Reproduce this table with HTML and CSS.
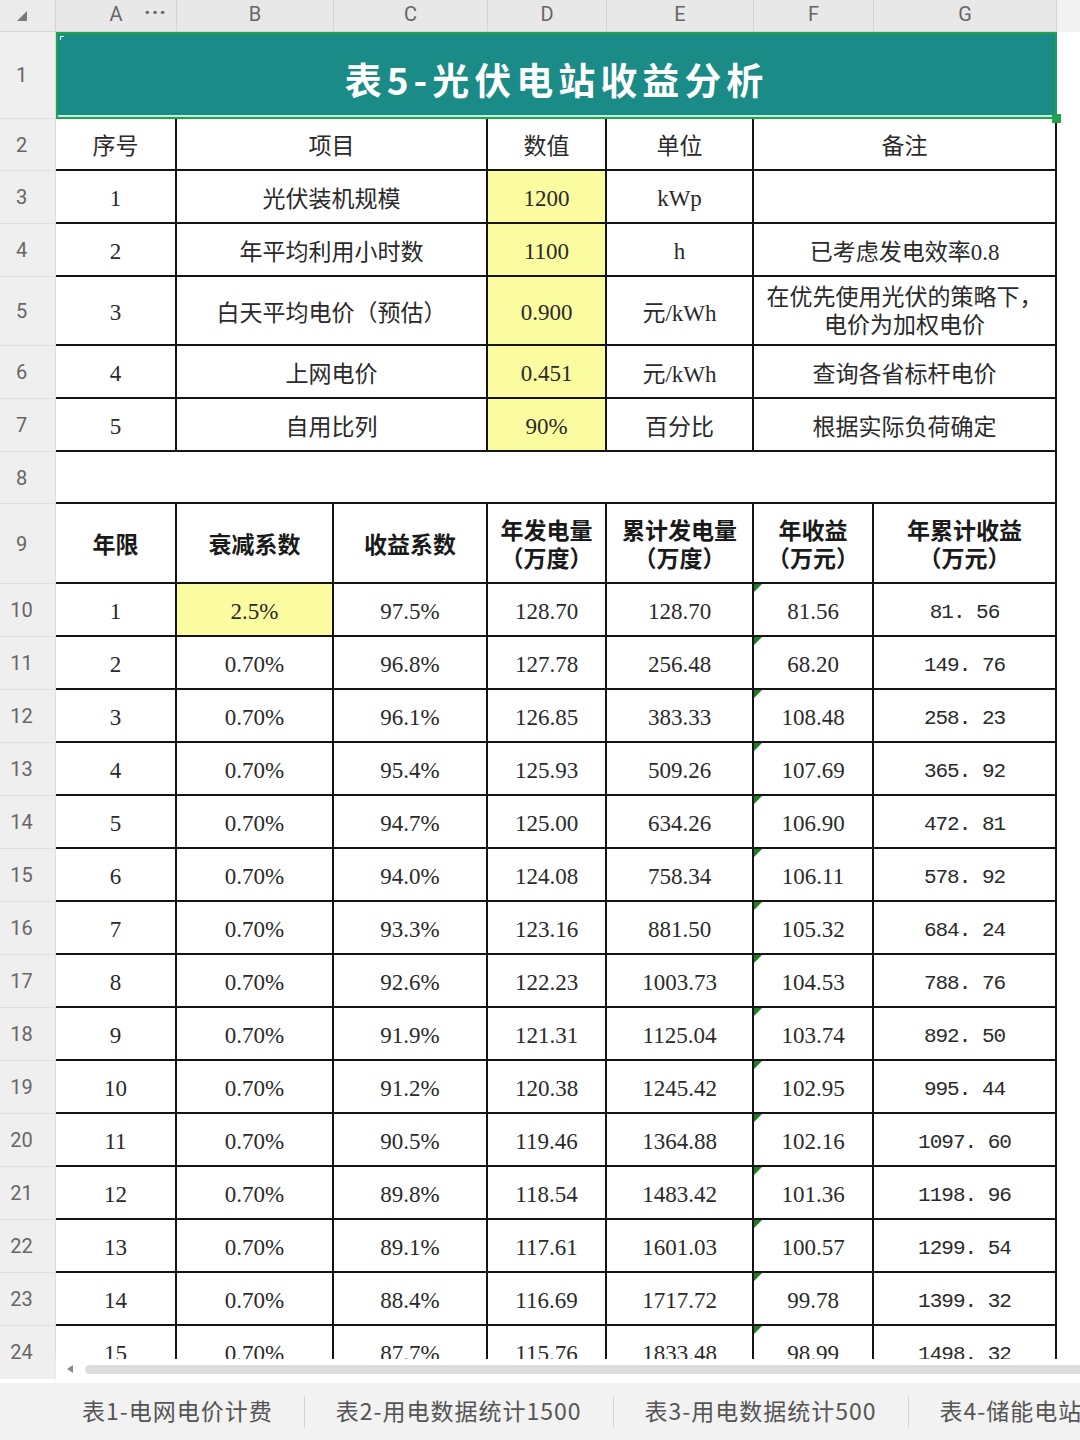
FILE: index.html
```html
<!DOCTYPE html>
<html lang="zh-CN">
<head>
<meta charset="utf-8">
<title>表5-光伏电站收益分析</title>
<link rel="stylesheet" href="styles.css">
</head>
<body>
<div class="app">
  <div class="viewport">
    <div class="sheet">
      <div class="corner"><span class="corner-tri"></span></div>
      <div class="ch ch-a">A<span class="dots">···</span></div>
      <div class="ch">B</div>
      <div class="ch">C</div>
      <div class="ch">D</div>
      <div class="ch">E</div>
      <div class="ch">F</div>
      <div class="ch">G</div>
      <div class="ch-fill"></div>

      <div class="rh">1</div>
      <div class="title"><span class="title-mark"></span>表5-光伏电站收益分析<span class="handle"></span></div>
      <div class="fill"></div>

      <div class="rh">2</div>
      <div class="c k">序号</div><div class="c k span2">项目</div><div class="c k">数值</div><div class="c k">单位</div><div class="c k span2">备注</div>
      <div class="fill"></div>

      <div class="rh">3</div>
      <div class="c">1</div><div class="c k span2">光伏装机规模</div><div class="c y">1200</div><div class="c">kWp</div><div class="c k span2"></div>
      <div class="fill"></div>

      <div class="rh">4</div>
      <div class="c">2</div><div class="c k span2">年平均利用小时数</div><div class="c y">1100</div><div class="c">h</div><div class="c k span2">已考虑发电效率0.8</div>
      <div class="fill"></div>

      <div class="rh">5</div>
      <div class="c">3</div><div class="c k span2">白天平均电价（预估）</div><div class="c y">0.900</div><div class="c k">元/kWh</div><div class="c k span2 note">在优先使用光伏的策略下，<br>电价为加权电价</div>
      <div class="fill"></div>

      <div class="rh">6</div>
      <div class="c">4</div><div class="c k span2">上网电价</div><div class="c y">0.451</div><div class="c k">元/kWh</div><div class="c k span2">查询各省标杆电价</div>
      <div class="fill"></div>

      <div class="rh">7</div>
      <div class="c">5</div><div class="c k span2">自用比列</div><div class="c y">90%</div><div class="c k">百分比</div><div class="c k span2">根据实际负荷确定</div>
      <div class="fill"></div>

      <div class="rh">8</div>
      <div class="c span7"></div>
      <div class="fill"></div>

      <div class="rh">9</div>
      <div class="c hd">年限</div><div class="c hd">衰减系数</div><div class="c hd">收益系数</div><div class="c hd">年发电量<br>（万度）</div><div class="c hd">累计发电量<br>（万度）</div><div class="c hd">年收益<br>（万元）</div><div class="c hd">年累计收益<br>（万元）</div>
      <div class="fill"></div>

      <div class="rh">10</div>
      <div class="c">1</div><div class="c y">2.5%</div><div class="c">97.5%</div><div class="c">128.70</div><div class="c">128.70</div><div class="c tri">81.56</div><div class="c mono">81. 56</div>
      <div class="fill"></div>

      <div class="rh">11</div>
      <div class="c">2</div><div class="c">0.70%</div><div class="c">96.8%</div><div class="c">127.78</div><div class="c">256.48</div><div class="c tri">68.20</div><div class="c mono">149. 76</div>
      <div class="fill"></div>

      <div class="rh">12</div>
      <div class="c">3</div><div class="c">0.70%</div><div class="c">96.1%</div><div class="c">126.85</div><div class="c">383.33</div><div class="c tri">108.48</div><div class="c mono">258. 23</div>
      <div class="fill"></div>

      <div class="rh">13</div>
      <div class="c">4</div><div class="c">0.70%</div><div class="c">95.4%</div><div class="c">125.93</div><div class="c">509.26</div><div class="c tri">107.69</div><div class="c mono">365. 92</div>
      <div class="fill"></div>

      <div class="rh">14</div>
      <div class="c">5</div><div class="c">0.70%</div><div class="c">94.7%</div><div class="c">125.00</div><div class="c">634.26</div><div class="c tri">106.90</div><div class="c mono">472. 81</div>
      <div class="fill"></div>

      <div class="rh">15</div>
      <div class="c">6</div><div class="c">0.70%</div><div class="c">94.0%</div><div class="c">124.08</div><div class="c">758.34</div><div class="c tri">106.11</div><div class="c mono">578. 92</div>
      <div class="fill"></div>

      <div class="rh">16</div>
      <div class="c">7</div><div class="c">0.70%</div><div class="c">93.3%</div><div class="c">123.16</div><div class="c">881.50</div><div class="c tri">105.32</div><div class="c mono">684. 24</div>
      <div class="fill"></div>

      <div class="rh">17</div>
      <div class="c">8</div><div class="c">0.70%</div><div class="c">92.6%</div><div class="c">122.23</div><div class="c">1003.73</div><div class="c tri">104.53</div><div class="c mono">788. 76</div>
      <div class="fill"></div>

      <div class="rh">18</div>
      <div class="c">9</div><div class="c">0.70%</div><div class="c">91.9%</div><div class="c">121.31</div><div class="c">1125.04</div><div class="c tri">103.74</div><div class="c mono">892. 50</div>
      <div class="fill"></div>

      <div class="rh">19</div>
      <div class="c">10</div><div class="c">0.70%</div><div class="c">91.2%</div><div class="c">120.38</div><div class="c">1245.42</div><div class="c tri">102.95</div><div class="c mono">995. 44</div>
      <div class="fill"></div>

      <div class="rh">20</div>
      <div class="c">11</div><div class="c">0.70%</div><div class="c">90.5%</div><div class="c">119.46</div><div class="c">1364.88</div><div class="c tri">102.16</div><div class="c mono">1097. 60</div>
      <div class="fill"></div>

      <div class="rh">21</div>
      <div class="c">12</div><div class="c">0.70%</div><div class="c">89.8%</div><div class="c">118.54</div><div class="c">1483.42</div><div class="c tri">101.36</div><div class="c mono">1198. 96</div>
      <div class="fill"></div>

      <div class="rh">22</div>
      <div class="c">13</div><div class="c">0.70%</div><div class="c">89.1%</div><div class="c">117.61</div><div class="c">1601.03</div><div class="c tri">100.57</div><div class="c mono">1299. 54</div>
      <div class="fill"></div>

      <div class="rh">23</div>
      <div class="c">14</div><div class="c">0.70%</div><div class="c">88.4%</div><div class="c">116.69</div><div class="c">1717.72</div><div class="c tri">99.78</div><div class="c mono">1399. 32</div>
      <div class="fill"></div>

      <div class="rh">24</div>
      <div class="c">15</div><div class="c">0.70%</div><div class="c">87.7%</div><div class="c">115.76</div><div class="c">1833.48</div><div class="c tri">98.99</div><div class="c mono">1498. 32</div>
      <div class="fill"></div>
    </div>
  </div>

  <div class="hscroll">
    <div class="hs-rh"></div>
    <div class="hs-track">
      <span class="hs-arrow"></span>
      <span class="hs-bar"></span>
    </div>
  </div>

  <div class="tabs">
    <div class="tab">表1-电网电价计费</div>
    <span class="sep"></span>
    <div class="tab">表2-用电数据统计1500</div>
    <span class="sep"></span>
    <div class="tab">表3-用电数据统计500</div>
    <span class="sep"></span>
    <div class="tab">表4-储能电站收益分析</div>
  </div>
</div>
</body>
</html>
```

FILE: styles.css
```css
* { box-sizing: border-box; }

html, body {
  margin: 0;
  padding: 0;
  background: #ffffff;
}

body {
  width: 1080px;
  height: 1440px;
  overflow: hidden;
  font-family: "Noto Sans CJK SC", "Noto Sans", sans-serif;
}

.app {
  display: flex;
  flex-direction: column;
  height: 1440px;
}

.viewport {
  height: 1359px;
  overflow: hidden;
  flex: none;
}

.sheet {
  display: grid;
  grid-template-columns: 56px 121px 157px 154px 119px 147px 120px 183px 1fr;
  grid-template-rows: 32px 87px 52px 53px 53px 69px 53px 53px 52px 80px repeat(15, 53px);
}

/* column headers */
.corner {
  background: #ebebeb;
  border-right: 1px solid #d4d4d4;
  border-bottom: 1px solid #d4d4d4;
  display: flex;
  align-items: center;
  justify-content: center;
  padding-right: 12px;
}

.corner-tri {
  width: 0;
  height: 0;
  border-left: 10px solid transparent;
  border-bottom: 10px solid #7a7a7a;
}

.ch {
  background: #e8e8e8;
  color: #666666;
  font-family: Roboto, "Noto Sans", sans-serif;
  font-size: 20px;
  display: flex;
  align-items: center;
  justify-content: center;
  border-right: 1px solid #d4d4d4;
  border-bottom: 1px solid #d4d4d4;
  padding-bottom: 3px;
  position: relative;
}

.ch-a .dots {
  position: absolute;
  right: 9px;
  top: 0;
  bottom: 6px;
  display: flex;
  align-items: center;
  font-size: 22px;
  font-weight: 700;
  letter-spacing: 1px;
  color: #666;
}

.ch-fill {
  background: #f3f3f3;
}

/* row headers */
.rh {
  background: #efefef;
  color: #666666;
  font-family: Roboto, "Noto Sans", sans-serif;
  font-size: 20px;
  display: flex;
  align-items: center;
  justify-content: center;
  padding-right: 12px;
  border-right: 1px solid #dadada;
  border-bottom: 1px solid #dfdfdf;
}

.fill {
  background: #ffffff;
}

/* title */
.title {
  grid-column: span 7;
  position: relative;
  background: #1b8b87;
  border: 2px solid #22a24c;
  box-shadow: inset 0 -2px 0 #bff0e4;
  color: #ffffff;
  font-family: "Noto Sans CJK SC", sans-serif;
  font-weight: 700;
  font-size: 37px;
  letter-spacing: 5px;
  display: flex;
  align-items: center;
  justify-content: center;
  padding-top: 6px;
}

.title-mark {
  position: absolute;
  left: 2px;
  top: 2px;
  width: 4px;
  height: 4px;
  border-left: 1px solid #ffffff;
  border-top: 1px solid #ffffff;
}

.handle {
  position: absolute;
  right: -6px;
  bottom: -6px;
  width: 9px;
  height: 9px;
  background: #22a24c;
  z-index: 2;
}

/* cells */
.c {
  position: relative;
  border-right: 2px solid #141414;
  border-bottom: 2px solid #141414;
  display: flex;
  align-items: center;
  justify-content: center;
  text-align: center;
  font-family: "Liberation Serif", "Noto Sans CJK SC", serif;
  font-size: 23px;
  color: #2a2a2a;
  background: #ffffff;
  padding-top: 5px;
}

.c.k { padding-top: 0; }

.span2 { grid-column: span 2; }
.span7 { grid-column: span 7; }

.y { background: #fbfba0; }

.note {
  line-height: 28px;
}

.c.note { padding-top: 2px; }

.c.hd {
  font-family: "Noto Sans CJK SC", sans-serif;
  font-weight: 700;
  font-size: 23px;
  line-height: 28px;
  color: #1a1a1a;
  padding-top: 0;
}

.c.mono {
  font-family: "Liberation Mono", "DejaVu Sans Mono", monospace;
  font-size: 21px;
  letter-spacing: -1px;
  padding-top: 6px;
}

.tri::before {
  content: "";
  position: absolute;
  left: 0;
  top: 0;
  width: 0;
  height: 0;
  border-top: 8px solid #1e7d25;
  border-right: 8px solid transparent;
}

/* horizontal scroll strip */
.hscroll {
  display: flex;
  height: 24px;
  flex: none;
}

.hs-rh {
  width: 56px;
  background: #efefef;
  height: 20px;
}

.hs-track {
  flex: 1;
  background: #ffffff;
  display: flex;
  align-items: center;
  padding-left: 11px;
  padding-bottom: 4px;
  box-shadow: 0 1px 2px rgba(0,0,0,0.06);
}

.hs-arrow {
  width: 0;
  height: 0;
  border-top: 4px solid transparent;
  border-bottom: 4px solid transparent;
  border-right: 6px solid #8a8a8a;
}

.hs-bar {
  flex: 1;
  height: 9px;
  margin-left: 12px;
  background: #dcdcdc;
  border-radius: 5px 0 0 5px;
}

/* sheet tabs */
.tabs {
  flex: 1;
  background: #f2f2f2;
  display: flex;
  align-items: center;
  padding-left: 51px;
  white-space: nowrap;
  overflow: hidden;
}

.tab {
  padding: 0 31px;
  font-family: "Noto Sans CJK SC", sans-serif;
  font-size: 23px;
  letter-spacing: 1px;
  color: #555555;
  padding-bottom: 4px;
}

.sep {
  width: 1px;
  height: 32px;
  background: #d2d2d2;
  flex: none;
}
```
